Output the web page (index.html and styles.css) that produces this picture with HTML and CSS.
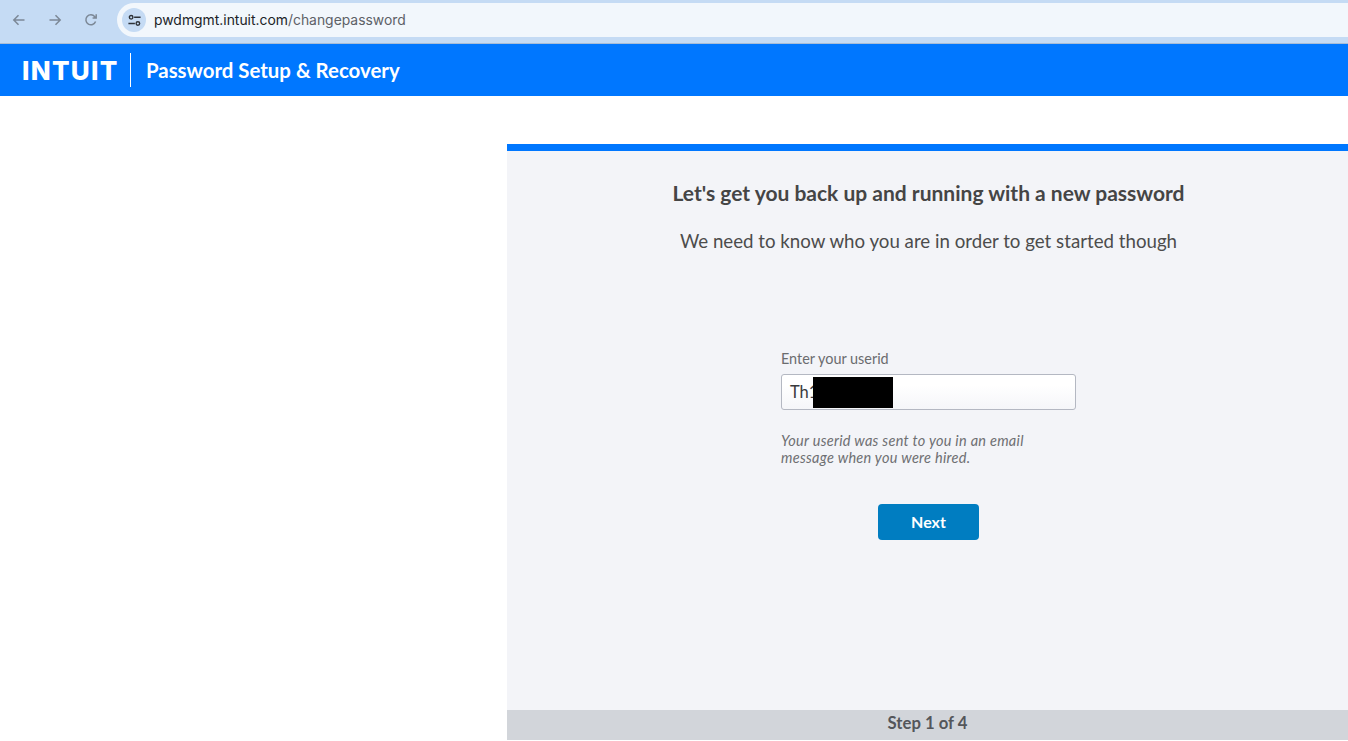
FILE: index.html
```html
<!DOCTYPE html>
<html lang="en">
<head>
<meta charset="utf-8">
<title>Password Setup &amp; Recovery</title>
<link rel="stylesheet" href="styles.css">
</head>
<body>
<div class="browser-bar">
  <div class="nav-icons">
    <svg class="nav-icon" viewBox="0 0 16 16"><path d="M13.5 8H3M7.5 3.2 2.8 8l4.7 4.8"/></svg>
    <svg class="nav-icon" viewBox="0 0 16 16"><path d="M2.5 8H13M8.5 3.2 13.2 8l-4.7 4.8"/></svg>
    <svg class="nav-icon" viewBox="0 0 16 16"><path d="M12.6 9.6A5 5 0 1 1 11.8 4.7L13.2 6M13.2 2.2V6H9.6"/></svg>
  </div>
  <div class="omnibox">
    <span class="site-chip">
      <svg class="tune-icon" viewBox="0 0 16 16"><circle cx="4.4" cy="4.6" r="1.9"/><path d="M7.6 4.6h6.9M1.5 11.2h6.9"/><circle cx="11.6" cy="11.2" r="1.9"/></svg>
    </span>
    <span class="url"><span class="url-host">pwdmgmt.intuit.com</span>/changepassword</span>
  </div>
</div>
<header class="site-header">
  <span class="logo">INTUIT</span>
  <span class="divider"></span>
  <span class="site-title">Password Setup &amp; Recovery</span>
</header>
<main class="page">
  <div class="left-space"></div>
  <section class="panel">
    <div class="panel-body">
      <h1 class="headline">Let's get you back up and running with a new password</h1>
      <p class="subhead">We need to know who you are in order to get started though</p>
      <form class="user-form">
        <label class="field-label" for="userid">Enter your userid</label>
        <div class="input-box">
          <span class="input-value">Th1</span>
          <span class="redaction"></span>
        </div>
        <p class="hint">Your userid was sent to you in an email<br>message when you were hired.</p>
        <div class="actions"><button class="next-btn" type="button">Next</button></div>
      </form>
    </div>
    <div class="step-bar">Step 1 of 4</div>
  </section>
</main>
</body>
</html>
```
FILE: styles.css
```css
* { box-sizing: border-box; }
html, body { margin: 0; height: 100%; background: #fff; }
body {
  height: 741px;
  overflow: hidden;
  display: flex;
  flex-direction: column;
  font-family: "Lato", "Open Sans", sans-serif;
}
.browser-bar {
  height: 44px;
  background: #c5dbf4;
  border-bottom: 1px solid #a9bdd6;
  display: flex;
  padding-top: 3px;
  padding-left: 11px;
}
.nav-icons { display: flex; gap: 20px; width: 106px; height: 34px; align-items: center; }
.nav-icon { width: 16px; height: 16px; fill: none; stroke: #7c8896; stroke-width: 1.5; }
.omnibox {
  flex: 1;
  height: 34px;
  background: #f2f7fc;
  border-radius: 17px 0 0 17px;
  display: flex;
  align-items: center;
  padding-left: 5px;
  font-family: "Inter", "Roboto", sans-serif;
  font-size: 13.9px;
  color: #5d6167;
}
.site-chip {
  width: 24px;
  height: 24px;
  border-radius: 50%;
  background: #c5dbf4;
  display: flex;
  align-items: center;
  justify-content: center;
  margin-right: 8px;
}
.tune-icon { width: 15px; height: 15px; fill: none; stroke: #2d3238; stroke-width: 1.5; }
.url-host { color: #202327; }
.site-header {
  height: 52px;
  background: #0077ff;
  color: #fff;
  display: flex;
  align-items: center;
  padding-left: 22px;
}
.logo {
  font-family: "Inter", sans-serif;
  font-weight: 800;
  font-size: 26px;
  letter-spacing: 1.3px;
  width: 95px;
  white-space: nowrap;
}
.divider { width: 1px; height: 34px; background: #fff; margin-left: 13px; margin-right: 15px; }
.site-title { font-size: 20.4px; font-weight: 700; }
.page { flex: 1; display: flex; padding-top: 48px; padding-bottom: 1px; min-height: 0; }
.left-space { width: 507px; flex: none; }
.panel {
  flex: 1;
  background: #f3f4f8;
  border-top: 7px solid #0077ff;
  display: flex;
  flex-direction: column;
}
.panel-body { flex: 1; display: flex; flex-direction: column; align-items: center; padding-left: 2px; color: #454545; }
.headline { margin: 28px 0 0; font-size: 21px; line-height: 28px; font-weight: 700; }
.subhead { margin: 20px 0 0; font-size: 18.7px; line-height: 28px; font-weight: 400; color: #4c4c4c; }
.user-form { width: 295px; margin-top: 95px; }
.field-label { display: block; font-size: 14.4px; line-height: 18px; color: #6b6c6f; }
.input-box {
  margin-top: 6px;
  height: 36px;
  border: 1px solid #b4b8c2;
  border-radius: 3px;
  background: linear-gradient(#ffffff 30%, #f5f6f9);
  display: flex;
  align-items: center;
  padding-left: 8px;
  font-size: 16.5px;
  color: #393a3c;
  position: relative;
}
.redaction { position: absolute; left: 31px; top: 2px; width: 80px; height: 31px; background: #000; }
.hint { margin: 22px 0 0; font-size: 14.5px; line-height: 17px; font-style: italic; letter-spacing: 0.28px; color: #6e6f72; }
.actions { display: flex; justify-content: center; margin-top: 38px; }
.next-btn {
  width: 101px;
  height: 36px;
  border: 0;
  border-radius: 4px;
  background: #007dc1;
  color: #fff;
  font-family: inherit;
  font-size: 16px;
  font-weight: 700;
  padding-bottom: 3px;
}
.step-bar {
  height: 30px;
  background: #d2d5da;
  color: #54565a;
  text-align: center;
  font-size: 16.7px;
  font-weight: 700;
  line-height: 27px;
}
```
